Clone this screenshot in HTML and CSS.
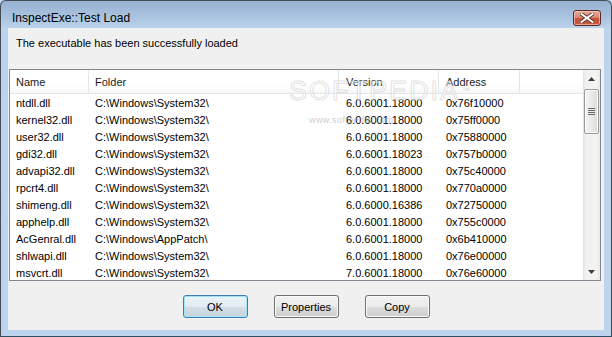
FILE: index.html
```html
<!DOCTYPE html>
<html>
<head>
<meta charset="utf-8">
<link rel="stylesheet" href="styles.css">
</head>
<body>
<div class="window">
  <div class="titlebar">
    <span class="title">InspectExe::Test Load</span>
    <div class="close">
      <svg width="14" height="10" viewBox="0 0 14 10"><path d="M1.5 1 L12.5 9 M12.5 1 L1.5 9" stroke="#5a2a22" stroke-width="3.6" stroke-linecap="square"/><path d="M1.5 1 L12.5 9 M12.5 1 L1.5 9" stroke="#ffffff" stroke-width="2" stroke-linecap="square"/></svg>
    </div>
  </div>
  <div class="client">
    <div class="message">The executable has been successfully loaded</div>
    <div class="list">
      <div class="table">
        <div class="row head">
          <div class="cell">Name</div><div class="cell">Folder</div><div class="cell">Version</div><div class="cell">Address</div><div class="cell"></div>
        </div>
        <div class="row"><div class="cell">ntdll.dll</div><div class="cell">C:\Windows\System32\</div><div class="cell">6.0.6001.18000</div><div class="cell">0x76f10000</div><div class="cell"></div></div>
        <div class="row"><div class="cell">kernel32.dll</div><div class="cell">C:\Windows\System32\</div><div class="cell">6.0.6001.18000</div><div class="cell">0x75ff0000</div><div class="cell"></div></div>
        <div class="row"><div class="cell">user32.dll</div><div class="cell">C:\Windows\System32\</div><div class="cell">6.0.6001.18000</div><div class="cell">0x75880000</div><div class="cell"></div></div>
        <div class="row"><div class="cell">gdi32.dll</div><div class="cell">C:\Windows\System32\</div><div class="cell">6.0.6001.18023</div><div class="cell">0x757b0000</div><div class="cell"></div></div>
        <div class="row"><div class="cell">advapi32.dll</div><div class="cell">C:\Windows\System32\</div><div class="cell">6.0.6001.18000</div><div class="cell">0x75c40000</div><div class="cell"></div></div>
        <div class="row"><div class="cell">rpcrt4.dll</div><div class="cell">C:\Windows\System32\</div><div class="cell">6.0.6001.18000</div><div class="cell">0x770a0000</div><div class="cell"></div></div>
        <div class="row"><div class="cell">shimeng.dll</div><div class="cell">C:\Windows\System32\</div><div class="cell">6.0.6000.16386</div><div class="cell">0x72750000</div><div class="cell"></div></div>
        <div class="row"><div class="cell">apphelp.dll</div><div class="cell">C:\Windows\System32\</div><div class="cell">6.0.6001.18000</div><div class="cell">0x755c0000</div><div class="cell"></div></div>
        <div class="row"><div class="cell">AcGenral.dll</div><div class="cell">C:\Windows\AppPatch\</div><div class="cell">6.0.6001.18000</div><div class="cell">0x6b410000</div><div class="cell"></div></div>
        <div class="row"><div class="cell">shlwapi.dll</div><div class="cell">C:\Windows\System32\</div><div class="cell">6.0.6001.18000</div><div class="cell">0x76e00000</div><div class="cell"></div></div>
        <div class="row"><div class="cell">msvcrt.dll</div><div class="cell">C:\Windows\System32\</div><div class="cell">7.0.6001.18000</div><div class="cell">0x76e60000</div><div class="cell"></div></div>
        <div class="watermark">SOFTPEDIA<span class="tm">™</span></div>
        <div class="watermark-url">www.softpedia.com</div>
      </div>
      <div class="scrollbar">
        <div class="arrow up"><svg width="7" height="4" viewBox="0 0 7 4"><path d="M0 4 L3.5 0 L7 4 Z" fill="#3e3e3e"/></svg></div>
        <div class="track">
          <div class="thumb"><div class="grip"><i></i><i></i><i></i><i></i></div></div>
        </div>
        <div class="arrow down"><svg width="7" height="4" viewBox="0 0 7 4"><path d="M0 0 L7 0 L3.5 4 Z" fill="#3e3e3e"/></svg></div>
      </div>
    </div>
    <div class="buttons">
      <button class="btn default">OK</button>
      <button class="btn">Properties</button>
      <button class="btn">Copy</button>
    </div>
  </div>
</div>
</body>
</html>
```
FILE: styles.css
```css
* { box-sizing: border-box; }
html, body { margin: 0; padding: 0; }
body {
  width: 612px;
  height: 337px;
  overflow: hidden;
  background: #bcd4ec;
  font-family: "Liberation Sans", Tahoma, sans-serif;
  font-size: 11px;
  color: #000;
}
.window {
  width: 612px;
  height: 337px;
  display: flex;
  flex-direction: column;
  border: 1px solid #444b55;
  border-bottom-color: #2d4f63;
  border-radius: 6px 6px 0 0;
  background: linear-gradient(#97b2d2 0, #a9c3e0 16px, #bcd3ec 27px, #bdd4ec 100%);
}
.titlebar {
  height: 27px;
  flex: none;
  display: flex;
  align-items: flex-start;
  padding-left: 11px;
  padding-right: 10px;
}
.title {
  font-size: 12px;
  margin-top: 10px;
  color: #000;
  line-height: 14px;
}
.close {
  margin-left: auto;
  margin-top: 9px;
  width: 28px;
  height: 16px;
  border: 1px solid #5b2a26;
  border-radius: 3px;
  background: linear-gradient(#e6a796 0, #d88a77 45%, #c44f38 55%, #c65b44 100%);
  box-shadow: inset 0 0 0 1px rgba(255, 220, 210, 0.55);
  display: flex;
  align-items: center;
  justify-content: center;
}
.client {
  flex: 1;
  margin: 0 7px 6px 7px;
  background: #f0f0f0;
  display: flex;
  flex-direction: column;
}
.message {
  height: 41px;
  flex: none;
  padding: 9px 0 0 8px;
  line-height: 13px;
}
.list {
  flex: none;
  height: 212px;
  margin: 0 3px 0 1px;
  border: 1px solid #828790;
  background: #fff;
  display: flex;
  overflow: hidden;
}
.table {
  flex: 1;
  position: relative;
  overflow: hidden;
}
.row {
  display: grid;
  grid-template-columns: 79px 250px 100px 81px 1fr;
  height: 17px;
  line-height: 17px;
}
.cell {
  padding: 1px 0 0 6px;
  white-space: nowrap;
  overflow: hidden;
}
.row .cell:nth-child(3), .row .cell:nth-child(4) { padding-left: 7px; }
.row.head {
  height: 24px;
  line-height: 23px;
  border-bottom: 1px solid #e5e5e5;
  background: linear-gradient(#ffffff 0, #ffffff 60%, #f7f8fa 100%);
  color: #1b1b1b;
}
.row.head .cell { border-right: 1px solid #e3e6ea; }
.row.head .cell:last-child { border-right: none; }
.watermark {
  position: absolute;
  left: 279px;
  top: 6px;
  font-size: 27px;
  letter-spacing: 2px;
  color: rgba(255, 255, 255, 0.5);
  -webkit-text-stroke: 1px rgba(190, 190, 190, 0.45);
  font-family: "Liberation Sans", sans-serif;
  line-height: 30px;
}
.watermark .tm {
  font-size: 8px;
  vertical-align: top;
  -webkit-text-stroke: 0;
  color: #d8d8d8;
  letter-spacing: 0;
  margin-left: 2px;
}
.watermark-url {
  position: absolute;
  left: 299px;
  top: 45px;
  font-size: 9px;
  color: rgba(160, 160, 160, 0.55);
  letter-spacing: 0.4px;
}
.scrollbar {
  width: 17px;
  flex: none;
  display: flex;
  flex-direction: column;
  background: linear-gradient(90deg, #e4e4e4 0, #f1f1f1 20%, #f3f3f3 80%, #e9e9e9 100%);
}
.arrow {
  height: 17px;
  flex: none;
  display: flex;
  align-items: center;
  justify-content: center;
}
.track {
  flex: 1;
  padding: 2px 1px 0 1px;
}
.thumb {
  height: 45px;
  border: 1px solid #9a9a9a;
  border-radius: 2px;
  background: linear-gradient(90deg, #f3f3f3 0, #e9e9e9 50%, #dcdcdc 100%);
  box-shadow: inset 0 0 0 1px #fbfbfb;
  display: flex;
  align-items: center;
  justify-content: center;
}
.grip {
  display: flex;
  flex-direction: column;
  gap: 1px;
}
.grip i {
  display: block;
  width: 7px;
  height: 1px;
  background: #6a6a6a;
}
.buttons {
  flex: 1;
  display: flex;
  justify-content: center;
  align-items: flex-start;
  padding-top: 14px;
  gap: 26px;
}
.btn {
  width: 65px;
  height: 23px;
  padding: 0;
  font-family: "Liberation Sans", Tahoma, sans-serif;
  font-size: 11px;
  color: #000;
  border: 1px solid #707070;
  border-radius: 3px;
  background: linear-gradient(#f2f2f2 0, #ebebeb 50%, #dddddd 51%, #cfcfcf 100%);
  box-shadow: inset 0 0 0 1px #fcfcfc;
}
.btn.default {
  border-color: #3c7fb1;
  box-shadow: inset 0 0 0 1px #a6e1f7;
  background: linear-gradient(#eaf3f8 0, #e2ecf2 50%, #d3dfe6 51%, #c8d4db 100%);
}
```
